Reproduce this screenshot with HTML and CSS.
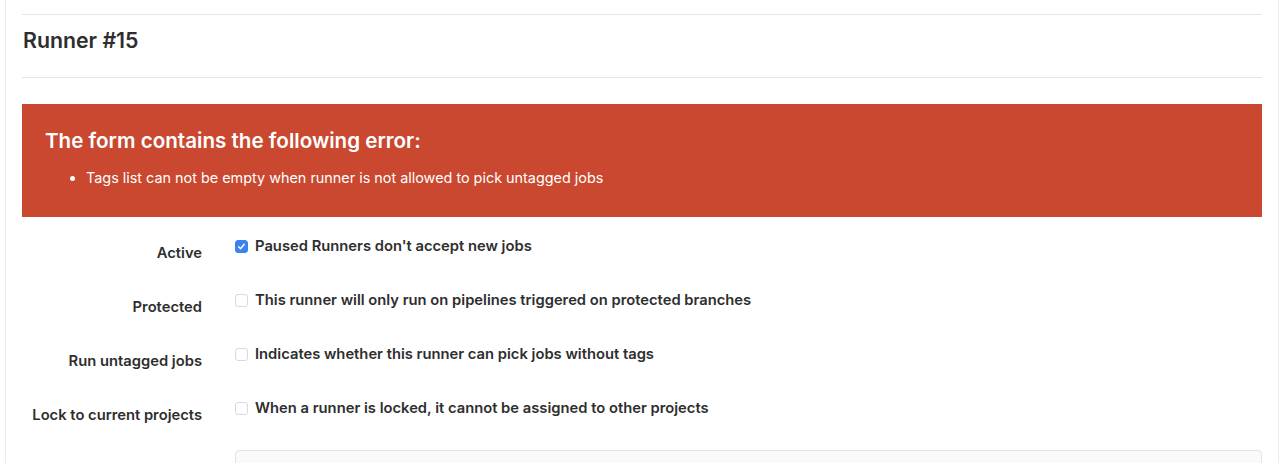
FILE: index.html
```html
<!DOCTYPE html>
<html>
<head>
<meta charset="utf-8">
<link rel="stylesheet" href="styles.css">
</head>
<body>
<div class="page">
  <div class="content">
    <hr class="rule top-rule">
    <h3 class="title">Runner #15</h3>
    <hr class="rule">
    <div class="alert">
      <h4 class="alert-title">The form contains the following error:</h4>
      <ul class="alert-list">
        <li>Tags list can not be empty when runner is not allowed to pick untagged jobs</li>
      </ul>
    </div>
    <form class="form">
      <div class="row">
        <label class="row-label">Active</label>
        <label class="check"><span class="box checked"><svg viewBox="0 0 13 13" width="13" height="13"><path d="M3.6 6.8 L5.6 8.7 L9.2 4.3" fill="none" stroke="#fff" stroke-width="1.4" stroke-linecap="round" stroke-linejoin="round"/></svg></span>Paused Runners don't accept new jobs</label>
      </div>
      <div class="row">
        <label class="row-label">Protected</label>
        <label class="check"><span class="box"></span>This runner will only run on pipelines triggered on protected branches</label>
      </div>
      <div class="row">
        <label class="row-label">Run untagged jobs</label>
        <label class="check"><span class="box"></span>Indicates whether this runner can pick jobs without tags</label>
      </div>
      <div class="row">
        <label class="row-label">Lock to current projects</label>
        <label class="check"><span class="box"></span>When a runner is locked, it cannot be assigned to other projects</label>
      </div>
      <div class="row">
        <label class="row-label"></label>
        <div class="input"></div>
      </div>
    </form>
  </div>
</div>
</body>
</html>
```

FILE: styles.css
```css
html, body {
  margin: 0;
  padding: 0;
  background: #fff;
  font-family: Inter, "Liberation Sans", Arial, sans-serif;
  color: #2e2e2e;
}
.page {
  margin-left: 5px;
  width: 1272px;
  border-left: 1px solid #ececec;
  border-right: 1px solid #ececec;
  height: 463px;
  overflow: hidden;
}
.content {
  padding: 14px 16px 0 16px;
}
.rule {
  border: 0;
  border-top: 1px solid #e5e5e5;
  margin: 0;
}
.title {
  margin: 0;
  padding: 13px 0 0 1px;
  height: 62px;
  box-sizing: border-box;
  font-size: 21.3px;
  line-height: 24px;
  font-weight: 600;
  color: #2e2e2e;
}
.alert {
  margin-top: 26px;
  background: #c9482f;
  color: #fff;
  height: 113px;
  box-sizing: border-box;
  padding: 25px 23px 0 23px;
}
.alert-title {
  margin: 0;
  font-size: 20.6px;
  line-height: 24px;
  font-weight: 600;
}
.alert-list {
  margin: 15px 0 0 0;
  padding-left: 41px;
  font-size: 14.4px;
  line-height: 20px;
}
.form {
  padding-top: 19px;
}
.row {
  display: grid;
  grid-template-columns: 180px 1fr;
  column-gap: 33px;
  height: 54px;
}
.row-label {
  text-align: right;
  font-size: 14.75px;
  font-weight: 600;
  line-height: 20px;
  padding-top: 7px;
}
.check {
  display: flex;
  align-items: center;
  gap: 7px;
  font-size: 14.75px;
  font-weight: 600;
  line-height: 20px;
  height: 20px;
}
.box {
  width: 13px;
  height: 13px;
  flex: none;
  box-sizing: border-box;
  border: 1px solid #d9d9d9;
  border-radius: 3px;
  background: #fff;
  display: flex;
  align-items: center;
  justify-content: center;
}
.box.checked {
  background: #3b82f0;
  border-color: #3b82f0;
}
.box svg {
  display: block;
  margin: -1px;
}
.input {
  margin-top: -2px;
  height: 40px;
  border: 1px solid #e3e3e3;
  border-radius: 4px;
  background: #fafafa;
}
```
